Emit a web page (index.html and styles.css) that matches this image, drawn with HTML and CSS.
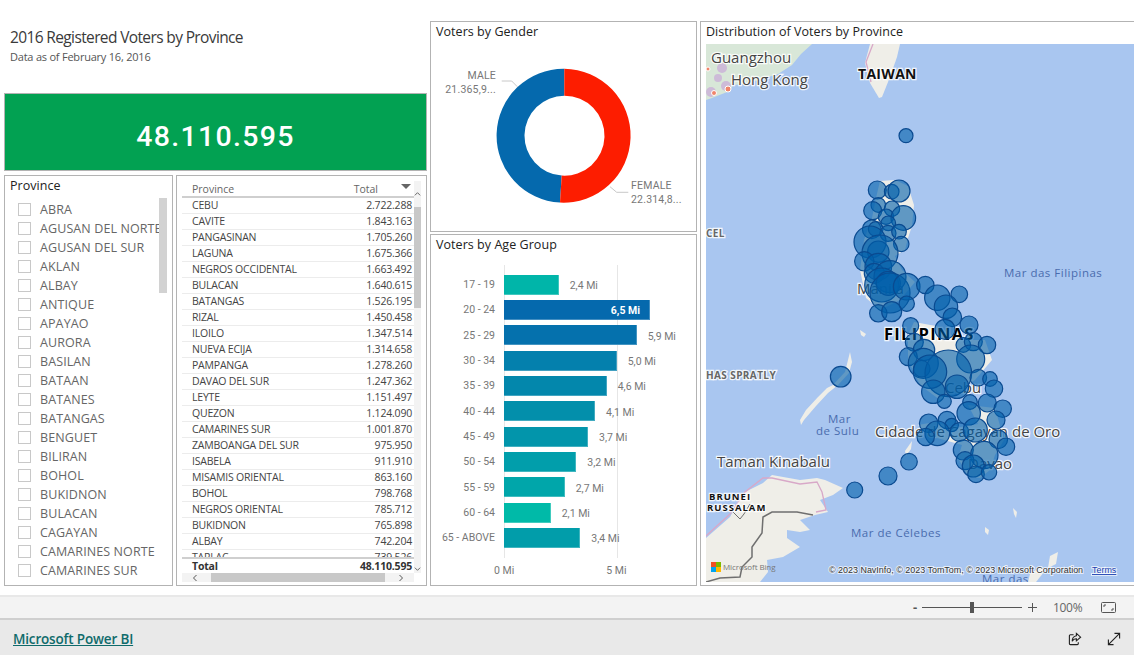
FILE: index.html
```html
<!DOCTYPE html>
<html lang="pt">
<head>
<meta charset="utf-8">
<title>2016 Registered Voters by Province</title>
<link rel="stylesheet" href="styles.css">
</head>
<body>
<main class="canvas">
  <section class="col-left">
    <header class="heading">
      <h1>2016 Registered Voters by Province</h1>
      <p>Data as of February 16, 2016</p>
    </header>
    <div class="kpi">48.110.595</div>
    <div class="left-row">
      <section class="panel slicer">
        <h2>Province</h2>
        <div class="slicer-thumb"></div>
        <ul class="slicer-list">
          <li><i></i>ABRA</li>
          <li><i></i>AGUSAN DEL NORTE</li>
          <li><i></i>AGUSAN DEL SUR</li>
          <li><i></i>AKLAN</li>
          <li><i></i>ALBAY</li>
          <li><i></i>ANTIQUE</li>
          <li><i></i>APAYAO</li>
          <li><i></i>AURORA</li>
          <li><i></i>BASILAN</li>
          <li><i></i>BATAAN</li>
          <li><i></i>BATANES</li>
          <li><i></i>BATANGAS</li>
          <li><i></i>BENGUET</li>
          <li><i></i>BILIRAN</li>
          <li><i></i>BOHOL</li>
          <li><i></i>BUKIDNON</li>
          <li><i></i>BULACAN</li>
          <li><i></i>CAGAYAN</li>
          <li><i></i>CAMARINES NORTE</li>
          <li><i></i>CAMARINES SUR</li>
        </ul>
      </section>
      <section class="panel table-panel">
        <div class="table-wrap">
          <div class="t-head"><span>Province</span><span>Total</span></div>
          <div class="sort-arrow"></div>
          <div class="t-body">
            <div class="t-row"><span>CEBU</span><span>2.722.288</span></div>
            <div class="t-row"><span>CAVITE</span><span>1.843.163</span></div>
            <div class="t-row"><span>PANGASINAN</span><span>1.705.260</span></div>
            <div class="t-row"><span>LAGUNA</span><span>1.675.366</span></div>
            <div class="t-row"><span>NEGROS OCCIDENTAL</span><span>1.663.492</span></div>
            <div class="t-row"><span>BULACAN</span><span>1.640.615</span></div>
            <div class="t-row"><span>BATANGAS</span><span>1.526.195</span></div>
            <div class="t-row"><span>RIZAL</span><span>1.450.458</span></div>
            <div class="t-row"><span>ILOILO</span><span>1.347.514</span></div>
            <div class="t-row"><span>NUEVA ECIJA</span><span>1.314.658</span></div>
            <div class="t-row"><span>PAMPANGA</span><span>1.278.260</span></div>
            <div class="t-row"><span>DAVAO DEL SUR</span><span>1.247.362</span></div>
            <div class="t-row"><span>LEYTE</span><span>1.151.497</span></div>
            <div class="t-row"><span>QUEZON</span><span>1.124.090</span></div>
            <div class="t-row"><span>CAMARINES SUR</span><span>1.001.870</span></div>
            <div class="t-row"><span>ZAMBOANGA DEL SUR</span><span>975.950</span></div>
            <div class="t-row"><span>ISABELA</span><span>911.910</span></div>
            <div class="t-row"><span>MISAMIS ORIENTAL</span><span>863.160</span></div>
            <div class="t-row"><span>BOHOL</span><span>798.768</span></div>
            <div class="t-row"><span>NEGROS ORIENTAL</span><span>785.712</span></div>
            <div class="t-row"><span>BUKIDNON</span><span>765.898</span></div>
            <div class="t-row"><span>ALBAY</span><span>742.204</span></div>
            <div class="t-row"><span>TARLAC</span><span>739.526</span></div>
          </div>
          <div class="t-total"><span>Total</span><span>48.110.595</span></div>
          <div class="h-scroll"><svg class="chev" viewBox="0 0 8 8"><path d="M5.5 1 2.5 4l3 3"/></svg><div class="h-thumb"></div><svg class="chev" viewBox="0 0 8 8"><path d="M2.500 1l3 3-3 3"/></svg></div>
        </div>
        <div class="v-scroll">
          <svg class="chev up" viewBox="0 0 8 8"><path d="M1 5.500 4 2.500l3 3"/></svg>
          <div class="v-thumb"></div>
          <svg class="chev down" viewBox="0 0 8 8"><path d="M1 2.500 4 5.500l3-3"/></svg>
        </div>
      </section>
    </div>
  </section>

  <section class="col-mid">
    <section class="panel gender">
      <h2>Voters by Gender</h2>
      <svg class="donut" viewBox="0 0 265 187">
        <path class="leader" d="M70.700 36h10l5.600 5.700"/>
        <path class="leader" d="M179 141.700l6.700 5.600h11.600"/>
        <path fill="#0569ad" d="M133.300 23.700A67 67 0 0 0 129 157.600L130.700 130.600A40 40 0 0 1 133.300 50.700Z"/>
        <path fill="#fd1d00" d="M133.300 23.700A67 67 0 1 1 129 157.600L130.700 130.600A40 40 0 1 0 133.300 50.700Z"/>
        <text class="d-label" x="65" y="34" text-anchor="end">MALE</text>
        <text class="d-label" x="65" y="48" text-anchor="end">21.365,9...</text>
        <text class="d-label" x="200" y="144">FEMALE</text>
        <text class="d-label" x="200" y="158">22.314,8...</text>
      </svg>
    </section>
    <section class="panel age">
      <h2>Voters by Age Group</h2>
      <div class="chart">
        <div class="gridline g0"></div>
        <div class="gridline g5"></div>
        <div class="bar-row"><span class="b-label">17 - 19</span><div class="bar" style="width:54.7px;background:#00b5a9"></div><span class="b-val">2,4 Mi</span></div>
        <div class="bar-row"><span class="b-label">20 - 24</span><div class="bar" style="width:146px;background:#0569ad"><span class="b-in">6,5 Mi</span></div></div>
        <div class="bar-row"><span class="b-label">25 - 29</span><div class="bar" style="width:132.700px;background:#0571ad"></div><span class="b-val">5,9 Mi</span></div>
        <div class="bar-row"><span class="b-label">30 - 34</span><div class="bar" style="width:112.700px;background:#0480ad"></div><span class="b-val">5,0 Mi</span></div>
        <div class="bar-row"><span class="b-label">35 - 39</span><div class="bar" style="width:102.700px;background:#0387ac"></div><span class="b-val">4,6 Mi</span></div>
        <div class="bar-row"><span class="b-label">40 - 44</span><div class="bar" style="width:91px;background:#038fab"></div><span class="b-val">4,1 Mi</span></div>
        <div class="bar-row"><span class="b-label">45 - 49</span><div class="bar" style="width:84px;background:#0295ab"></div><span class="b-val">3,7 Mi</span></div>
        <div class="bar-row"><span class="b-label">50 - 54</span><div class="bar" style="width:72.300px;background:#019eab"></div><span class="b-val">3,2 Mi</span></div>
        <div class="bar-row"><span class="b-label">55 - 59</span><div class="bar" style="width:60.700px;background:#00a6aa"></div><span class="b-val">2,7 Mi</span></div>
        <div class="bar-row"><span class="b-label">60 - 64</span><div class="bar" style="width:46.700px;background:#00baa8"></div><span class="b-val">2,1 Mi</span></div>
        <div class="bar-row"><span class="b-label">65 - ABOVE</span><div class="bar" style="width:76.300px;background:#019daa"></div><span class="b-val">3,4 Mi</span></div>
        <div class="axis"><span>0 Mi</span><span>5 Mi</span></div>
      </div>
    </section>
  </section>

  <section class="panel map-panel">
    <h2>Distribution of Voters by Province</h2>
    <div class="map">
      <svg class="map-svg" viewBox="706 44 428 538">
        <path class="land-green" d="M706 44H812L801 54 792 65 778 74 762 79 745 84 733 85 730 91 722 94 712 98 706 100Z"/>
        <g fill="#c9a9d8" opacity=".7">
          <circle cx="722" cy="68" r="5"/><circle cx="726" cy="86" r="5"/><circle cx="711" cy="92" r="5"/><circle cx="718" cy="78" r="4"/>
        </g>
        <circle class="city" cx="728" cy="89" r="3"/><circle class="city" cx="714" cy="93" r="2.500"/><circle class="city" cx="708" cy="69" r="2"/>
        <path class="land" d="M870 44H900L897 57 890 77 882 97 879 98 870 83 865 63Z"/>
        <path class="border-pink" d="M873 44 866 62 871 82"/>
        <g class="land">
          <path d="M880 181 895 180 908 186 914 205 912 226 908 238 905 250 895 256 902 270 915 282 900 300 880 310 866 298 860 270 864 240 872 218 876 198Z"/>
          <path d="M914 322 936 326 960 340 985 340 992 360 975 380 955 392 940 400 920 385 908 360 908 335Z"/>
          <path d="M968 405 995 408 1004 440 995 455 990 470 980 478 968 476 958 458 962 445 930 436 918 425 935 422 955 428 978 424Z"/>
          <path d="M800 420 806 410 818 397 827 388 833 385 845 372 848 360 850 352 852 362 849 373 838 385 828 393 816 406 804 420 801 425Z"/>
          <path d="M860 330 866 334 864 337 861 335Z"/>
          <path d="M905 451 912 441 911 449 906 456Z"/>
          <path d="M706 538 730 517 743 493 763 483 772 475 800 480 817 478 825 480 843 488 833 495 820 500 828 512 815 515 800 520 810 530 800 532 787 530 787 538 800 547 783 557 767 560 768 572 760 582H706Z"/>
          <path d="M1013 508 1017 512 1016 518 1014 514Z"/>
          <path d="M985 527 989 530 988 535 985 532Z"/>
          <path d="M1050 556 1058 552 1056 564 1048 568Z"/>
          <path d="M1030 574 1042 566 1044 572 1036 582H1028Z"/>
        </g>
        <path class="border-pink" d="M706 536 730 514 745 492 763 478 772 478 800 484 817 482 822 492 826 510 816 512"/>
        <path class="border-dark" d="M706 582 720 578 740 577 742 567 752 557 752 547 762 533 763 517 772 512 797 512 813 515"/>
        <path class="border-dark thin" d="M733 512 740 519 744 514 750 504 754 512"/>
        <g>
          <text class="ml ml-city" x="711" y="63">Guangzhou</text>
          <text class="ml ml-city" x="731" y="85">Hong Kong</text>
          <text class="ml ml-bold" x="858" y="79">TAIWAN</text>
          <text class="ml ml-small" x="706" y="237">CEL</text>
          <text class="ml ml-small" x="706" y="379">HAS SPRATLY</text>
          <text class="ml ml-city" x="857" y="294">Manila</text>
          <text class="ml ml-bold2" x="884" y="340">FILIPINAS</text>
          <text class="ml ml-city" x="945" y="393">Cebu</text>
          <text class="ml ml-city" x="875" y="437">Cidade de Cagayan de Oro</text>
          <text class="ml ml-city" x="717" y="467">Taman Kinabalu</text>
          <text class="ml ml-city" x="968" y="469">Davao</text>
          <text class="ml ml-mini" x="709" y="500">BRUNEI</text>
          <text class="ml ml-mini" x="707" y="511">RUSSALAM</text>
        </g>
        <text class="ml-sea" x="1004" y="277">Mar das Filipinas</text>
        <text class="ml-sea" x="828" y="423">Mar</text>
        <text class="ml-sea" x="816" y="435">de Sulu</text>
        <text class="ml-sea" x="851" y="537">Mar de Célebes</text>
        <text class="ml-sea" x="982" y="583">Mar das</text>
        <g class="bubbles">
          <circle cx="906" cy="135.700" r="7"/><circle cx="877.300" cy="190" r="9"/><circle cx="891.700" cy="191.700" r="7.300"/><circle cx="899" cy="191" r="11"/>
          <circle cx="878.300" cy="205" r="7.300"/><circle cx="872.700" cy="210.700" r="9"/><circle cx="892" cy="208.700" r="7.700"/><circle cx="886" cy="216.700" r="7.700"/>
          <circle cx="903.300" cy="218" r="12.300"/><circle cx="888.300" cy="223.300" r="7.300"/><circle cx="871.700" cy="229.300" r="9.300"/><circle cx="875.700" cy="229" r="7.300"/>
          <circle cx="888" cy="233.300" r="8"/><circle cx="899" cy="231.700" r="7.300"/><circle cx="901.300" cy="244" r="7.700"/><circle cx="870" cy="242" r="16"/>
          <circle cx="878.300" cy="251.700" r="10.700"/><circle cx="880" cy="253" r="18"/><circle cx="864.300" cy="261.300" r="9.700"/><circle cx="878.300" cy="266.700" r="13.300"/>
          <circle cx="874.300" cy="273.300" r="10"/><circle cx="890" cy="276.700" r="16"/><circle cx="881.700" cy="285" r="17"/><circle cx="888.300" cy="283.300" r="12"/>
          <circle cx="890" cy="293" r="20"/><circle cx="906.700" cy="286.700" r="13.300"/><circle cx="925.300" cy="285" r="8.700"/><circle cx="937.300" cy="297.700" r="12.700"/>
          <circle cx="959.300" cy="294.300" r="8.300"/><circle cx="946" cy="306.700" r="11.700"/><circle cx="906.700" cy="303.700" r="7.700"/><circle cx="878.300" cy="313.300" r="8.700"/>
          <circle cx="891.700" cy="311.700" r="10"/><circle cx="952.300" cy="317.300" r="9.300"/><circle cx="969" cy="325" r="9"/><circle cx="910.700" cy="325.700" r="8"/>
          <circle cx="945" cy="329.300" r="10"/><circle cx="914.300" cy="342.300" r="9"/><circle cx="963.300" cy="345" r="7.300"/><circle cx="973.300" cy="341.700" r="9"/>
          <circle cx="987" cy="345" r="8.700"/><circle cx="924" cy="350" r="10.700"/><circle cx="908.300" cy="356.700" r="9"/><circle cx="923.300" cy="363.300" r="15"/>
          <circle cx="970.700" cy="359" r="14"/><circle cx="921.700" cy="368.700" r="8.300"/><circle cx="948.300" cy="373.300" r="23.300"/><circle cx="930" cy="371.700" r="16.700"/>
          <circle cx="978.300" cy="377.700" r="8.300"/><circle cx="990" cy="379" r="7.300"/><circle cx="994" cy="388.700" r="8.700"/><circle cx="957" cy="386.700" r="11.700"/>
          <circle cx="933.300" cy="391.700" r="11.700"/><circle cx="944.300" cy="401.300" r="7"/><circle cx="970" cy="402" r="7.300"/><circle cx="987.300" cy="403" r="9"/>
          <circle cx="1002.700" cy="408.700" r="8.700"/><circle cx="968.700" cy="413.300" r="11.700"/><circle cx="996" cy="420" r="9"/><circle cx="840.700" cy="376.700" r="10.300"/>
          <circle cx="928.700" cy="423.300" r="9.300"/><circle cx="947" cy="420" r="8.700"/><circle cx="951.700" cy="425" r="6.700"/><circle cx="937.300" cy="433.300" r="12.300"/>
          <circle cx="925.700" cy="437" r="8.700"/><circle cx="959.300" cy="432" r="9.300"/><circle cx="975.300" cy="430" r="12"/><circle cx="998.300" cy="439.300" r="9.300"/>
          <circle cx="1006" cy="446.700" r="8.700"/><circle cx="963.300" cy="450" r="10"/><circle cx="984.300" cy="455" r="13.700"/><circle cx="965" cy="460.700" r="9"/>
          <circle cx="973.300" cy="466" r="11"/><circle cx="976" cy="474.300" r="8.300"/><circle cx="989" cy="472.300" r="7.700"/><circle cx="909" cy="461.700" r="8.300"/>
          <circle cx="888" cy="476" r="9"/><circle cx="854.700" cy="490" r="8"/>
        </g>
        <rect x="711" y="562" width="5" height="5" fill="#f25022"/>
        <rect x="716" y="562" width="5" height="5" fill="#7fba00"/>
        <rect x="711" y="567" width="5" height="5" fill="#00a4ef"/>
        <rect x="716" y="567" width="5" height="5" fill="#ffb900"/>
        <text class="bing" x="723" y="570">Microsoft Bing</text>
        <text class="copy" x="829" y="573">© 2023 NavInfo, © 2023 TomTom, © 2023 Microsoft Corporation</text>
        <text class="terms" x="1092" y="573">Terms</text>
      </svg>
    </div>
  </section>
</main>

<div class="zoombar">
  <span class="z-minus">-</span>
  <div class="z-track"><div class="z-thumb"></div></div>
  <svg class="z-plus" viewBox="0 0 9 9"><path d="M4.500 0v9M0 4.500h9"/></svg>
  <span class="z-pct">100%</span>
  <svg class="z-fit" viewBox="0 0 15 11"><rect x=".5" y=".5" width="14" height="10" rx="1"/><path d="M3 5V3h2M12 6v2h-2"/></svg>
</div>

<footer class="footer">
  <a class="pbi-link" href="#">Microsoft Power BI</a>
  <div class="foot-icons">
    <svg class="foot-icon" viewBox="0 0 15 15"><path d="M6 3H2.500a1 1 0 0 0-1 1v8.500a1 1 0 0 0 1 1H10a1 1 0 0 0 1-1V11"/><path d="M9 1.500l4.500 4-4.500 4V7.300C7 7.300 5.500 8 4.500 10c0-3 1.500-5.500 4.500-6Z"/></svg>
    <svg class="foot-icon expand" viewBox="0 0 15 15"><path d="M1.500 13.500l12-12M8 1.500h5.500V7M1.500 8v5.500H7"/></svg>
  </div>
</footer>
</body>
</html>
```
FILE: styles.css
```css
* { box-sizing: border-box; }
html, body { margin: 0; padding: 0; }
body {
  width: 1134px;
  height: 655px;
  overflow: hidden;
  background: #fff;
  font-family: "Open Sans", "Noto Sans", sans-serif;
  color: #333;
}
h1, h2, p, ul { margin: 0; padding: 0; }

.canvas {
  display: flex;
  gap: 3px;
  height: 595px;
  padding-left: 4px;
  overflow: hidden;
}
.panel {
  border: 1px solid #b3b3b3;
  background: #fff;
  position: relative;
  overflow: hidden;
}
.panel h2 {
  font-size: 12.500px;
  font-weight: 400;
  line-height: 17px;
  color: #222;
  letter-spacing: .05px;
}

/* Left column */
.col-left { width: 423px; flex: none; display: flex; flex-direction: column; }
.heading { height: 93px; padding: 26px 0 0 6px; }
.heading h1 { font-size: 15.500px; font-weight: 400; line-height: 22px; color: #3a3a3a; letter-spacing: -.63px; }
.heading p { font-size: 11px; line-height: 16px; margin-top: 1px; color: #555; letter-spacing: -.22px; }
.kpi {
  height: 78px;
  background: #02a152;
  border: 1px solid #b3b3b3;
  color: #fff;
  display: flex;
  align-items: center;
  justify-content: center;
  padding-top: 8px;
  font-family: Roboto, sans-serif;
  font-weight: 500;
  font-size: 28.500px;
  letter-spacing: 1.300px;
}
.left-row { display: flex; gap: 3px; height: 411px; margin-top: 4px; }

.slicer { width: 169px; padding: 1px 0 0 5px; }
.slicer-list { list-style: none; margin-top: 6px; padding-left: 8px; white-space: nowrap; }
.slicer-list li {
  height: 19px;
  display: flex;
  align-items: center;
  gap: 9px;
  font-size: 12.500px;
  color: #666;
  letter-spacing: .1px;
}
.slicer-list i { width: 13px; height: 13px; border: 1px solid #c8c8c8; flex: none; }
.slicer-thumb { position: absolute; left: 154px; top: 22px; width: 8px; height: 95px; background: #d2d2d2; }

.table-panel { width: 251px; display: flex; padding: 5px 5px 3px 5px; }
.table-wrap { width: 233px; position: relative; display: flex; flex-direction: column; padding-top: 2px; }
.t-head {
  display: flex;
  justify-content: space-between;
  height: 15px;
  padding: 0 36px 0 10px;
  border-bottom: 2px solid #cfcfcf;
  font-size: 10.500px;
  line-height: 13px;
  color: #666;
}
.sort-arrow {
  position: absolute;
  right: 3px;
  top: 3px;
  border-left: 5.500px solid transparent;
  border-right: 5.500px solid transparent;
  border-top: 5px solid #666;
}
.t-body { height: 360px; overflow: hidden; }
.t-row, .t-total {
  display: flex;
  justify-content: space-between;
  padding: 0 2px 0 10px;
  font-size: 10.500px;
  letter-spacing: -.2px;
  color: #444;
}
.t-row { height: 16px; line-height: 15px; border-bottom: 1px solid #ececec; }
.t-total {
  height: 16px;
  line-height: 14px;
  border-top: 2px solid #cfcfcf;
  font-weight: 700;
  color: #333;
}
.h-scroll { display: flex; align-items: center; justify-content: space-between; height: 9px; background: #f3f3f3; padding: 0 9px; }
.h-thumb { width: 174px; height: 9px; background: #c8c8c8; }
.chev { width: 8px; height: 8px; fill: none; stroke: #555; stroke-width: 1; flex: none; }
.v-scroll { width: 7px; flex: none; background: #f3f3f3; position: relative; height: 392px; }
.v-scroll .up { position: absolute; top: 9px; left: 0; width: 7px; }
.v-scroll .down { position: absolute; bottom: 0; left: 0; width: 7px; }
.v-thumb { position: absolute; top: 26px; left: 0; width: 7px; height: 101px; background: #c8c8c8; }

/* Middle column */
.col-mid { width: 267px; flex: none; padding-top: 21px; display: flex; flex-direction: column; gap: 2px; }
.gender { height: 211px; padding: 1px 0 0 5px; }
.donut { position: absolute; left: 0; top: 23px; width: 265px; height: 187px; display: block; }
.leader { fill: none; stroke: #c8c8c8; stroke-width: 1; }
.d-label { font-family: Roboto, sans-serif; font-size: 10.500px; fill: #777; letter-spacing: .2px; }

.age { height: 352px; padding: 1px 0 0 5px; }
.chart { position: relative; margin: 0 0 0 -5px; padding-top: 19px; }
.gridline { position: absolute; top: 12px; height: 293px; width: 1px; background: #e6e6e6; }
.g0 { left: 73px; }
.g5 { left: 185.500px; }
.bar-row { display: flex; align-items: center; height: 25.330px; position: relative; }
.b-label {
  width: 64px;
  margin-right: 9px;
  text-align: right;
  font-family: Roboto, sans-serif;
  font-size: 10.500px;
  color: #777;
  white-space: nowrap;
  flex: none;
}
.bar { height: 20px; position: relative; flex: none; display: flex; align-items: center; justify-content: flex-end; box-shadow: inset -1px -1px 0 rgba(255,255,255,.25); }
.b-val { font-family: Roboto, sans-serif; font-size: 10.500px; color: #777; margin-left: 11px; padding-top: 2px; }
.b-in { font-family: Roboto, sans-serif; font-size: 10.500px; font-weight: 700; color: #fff; margin-right: 10px; padding-top: 2px; }
.axis { position: relative; height: 20px; margin-top: 13px; font-family: Roboto, sans-serif; font-size: 10.500px; color: #777; display: flex; padding-left: 63px; gap: 92px; }

/* Map */
.map-panel { width: 440px; flex: none; margin-top: 21px; height: 565px; padding: 1px 0 0 5px; }
.map-panel h2 { height: 21px; }
.map { width: 428px; height: 538px; }
.map-svg { width: 428px; height: 538px; display: block; background: #a9c6f0; }
.land { fill: #efeee8; }
.land-green { fill: #d8e7d8; }
.city { fill: #f0846a; stroke: #fff; stroke-width: 1; }
.border-pink { fill: none; stroke: #d8a8c8; stroke-width: 1.300; }
.border-dark { fill: none; stroke: #6f6f6f; stroke-width: 1.500; }
.border-dark.thin { stroke-width: 1; }
.ml { paint-order: stroke; stroke: rgba(255,255,255,.85); stroke-width: 2.500px; font-family: "Open Sans", sans-serif; }
.ml-city { font-size: 15px; fill: #444; letter-spacing: 0; }
.ml-bold { font-size: 14px; font-weight: 700; fill: #111; letter-spacing: .3px; }
.ml-bold2 { font-size: 16.500px; font-weight: 700; fill: #000; letter-spacing: 1.300px; }
.ml-small { font-size: 10px; font-weight: 700; fill: #666; letter-spacing: .4px; }
.ml-mini { font-size: 9.500px; font-weight: 700; fill: #111; letter-spacing: 1px; }
.ml-sea { font-family: "Open Sans", sans-serif; font-size: 11.500px; fill: #4a6cae; letter-spacing: .5px; }
.bubbles circle { fill: rgba(0, 95, 170, .6); stroke: #0a4a90; stroke-width: 1.200; }
.bing { font-family: "Open Sans", sans-serif; font-size: 8px; fill: #777; letter-spacing: -.1px; }
.copy { font-family: "Liberation Sans", sans-serif; font-size: 8.950px; fill: #333; paint-order: stroke; stroke: rgba(255,255,255,.7); stroke-width: 2px; }
.terms { font-family: "Liberation Sans", sans-serif; font-size: 8.950px; fill: #1a3fb0; text-decoration: underline; paint-order: stroke; stroke: rgba(255,255,255,.7); stroke-width: 2px; }

/* Bottom bars */
.zoombar {
  height: 23px;
  background: #f3f3f3;
  border-top: 2px solid #e8e8e8;
  display: flex;
  align-items: center;
  padding-left: 913px;
  color: #555;
  font-size: 12px;
}
.z-minus { width: 9px; font-weight: 700; font-size: 13px; line-height: 1; }
.z-track { width: 100px; height: 1px; background: #555; position: relative; }
.z-thumb { position: absolute; left: 48px; top: -5px; width: 4px; height: 11px; background: #555; }
.z-plus { width: 9px; height: 9px; margin-left: 6px; fill: none; stroke: #555; stroke-width: 1; }
.z-pct { margin-left: 16px; width: 48px; color: #666; letter-spacing: -.3px; font-size: 12px; }
.z-fit { width: 15px; height: 11px; fill: none; stroke: #555; stroke-width: 1; }

.footer {
  height: 37px;
  background: #e9e9e9;
  border-top: 2px solid #cfcfcf;
  display: flex;
  align-items: center;
  justify-content: space-between;
  padding: 2px 13px 0;
}
.pbi-link { font-size: 13.500px; font-weight: 600; color: #0f6b6b; text-decoration: underline; letter-spacing: -.17px; }
.foot-icons { display: flex; gap: 25px; }
.foot-icon { width: 14px; height: 14px; fill: none; stroke: #222; stroke-width: 1.200; }
```
